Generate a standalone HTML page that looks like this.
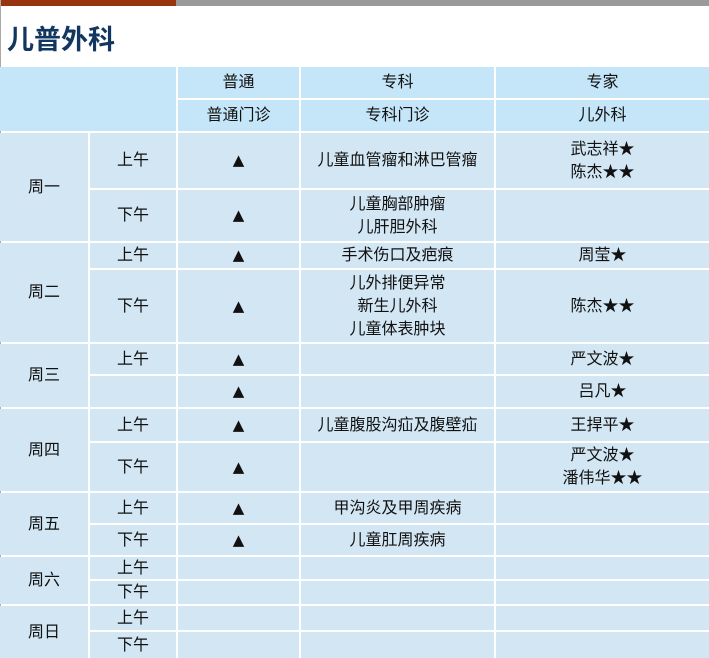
<!DOCTYPE html><html><head><meta charset="utf-8"><style>
body{margin:0;width:709px;height:658px;background:#fff;position:relative;overflow:hidden;font-family:"Liberation Sans","Noto Sans CJK SC",sans-serif;}
.c{position:absolute;background:#d2e6f4;display:flex;align-items:center;justify-content:center;text-align:center;font-size:16px;color:#111;line-height:23px;}
.h{background:#c4e6f8;}
.tri{font-family:"DejaVu Sans",sans-serif;font-size:15px;}
</style></head><body>
<div style="position:absolute;left:0;top:0;width:176px;height:6px;background:#983410"></div>
<div style="position:absolute;left:176px;top:0;width:533px;height:6px;background:#9a9a9a"></div>
<div style="position:absolute;left:0;top:0;width:1px;height:658px;background:#aaa"></div>
<div style="position:absolute;left:7px;top:18px;font-size:27px;font-weight:bold;color:#12365f;">儿普外科</div>
<div id="t"></div>
<script>
var X=[[0,88],[90,176],[178,299],[301,494],[496,709]];
var o='';
function c(x0,x1,y0,y1,t,h){o+='<div class="c'+(h?' h':'')+'" style="left:'+X[x0][0]+'px;width:'+(X[x1][1]-X[x0][0])+'px;top:'+y0+'px;height:'+(y1-y0)+'px">'+t+'</div>';}
c(0,1,67,131,'',1);c(2,2,67,98,'普通',1);c(3,3,67,98,'专科',1);c(4,4,67,98,'专家',1);
c(2,2,100,131,'普通门诊',1);c(3,3,100,131,'专科门诊',1);c(4,4,100,131,'儿外科',1);
var T='<span class="tri">▲</span>';
var R=[['周一',[[133,188,'上午',T,'儿童血管瘤和淋巴管瘤','武志祥★<br>陈杰★★'],[190,241,'下午',T,'儿童胸部肿瘤<br>儿肝胆外科','']]],
['周二',[[243,268,'上午',T,'手术伤口及疤痕','周莹★'],[270,342,'下午',T,'儿外排便异常<br>新生儿外科<br>儿童体表肿块','陈杰★★']]],
['周三',[[344,374,'上午',T,'','严文波★'],[376,407,'',T,'','吕凡★']]],
['周四',[[409,441,'上午',T,'儿童腹股沟疝及腹壁疝','王捍平★'],[443,491,'下午',T,'','严文波★<br>潘伟华★★']]],
['周五',[[493,523,'上午',T,'甲沟炎及甲周疾病',''],[525,555,'下午',T,'儿童肛周疾病','']]],
['周六',[[557,579,'上午','','',''],[581,604,'下午','','','']]],
['周日',[[606,630,'上午','','',''],[632,658,'下午','','','']]]];
R.forEach(function(d){var r=d[1];c(0,0,r[0][0],r[r.length-1][1],d[0]);r.forEach(function(e){c(1,1,e[0],e[1],e[2]);c(2,2,e[0],e[1],e[3]);c(3,3,e[0],e[1],e[4]);c(4,4,e[0],e[1],e[5]);});});
document.getElementById('t').innerHTML=o;
</script>
</body></html>
